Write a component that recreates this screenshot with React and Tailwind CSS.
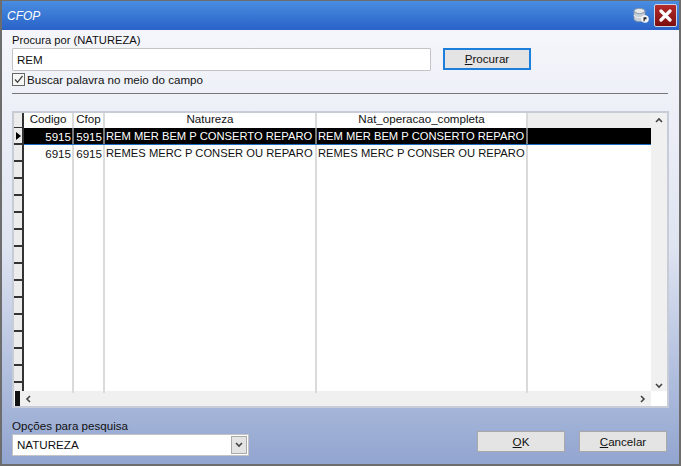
import React from 'react';

const COLS = [
  { name: 'Codigo', w: 'w-[50px]' },
  { name: 'Cfop', w: 'w-[31px]' },
  { name: 'Natureza', w: 'w-[212px]' },
  { name: 'Nat_operacao_completa', w: 'w-[211px]' },
];

const ROWS = [
  ['5915', '5915', 'REM MER BEM P CONSERTO REPARO', 'REM MER BEM P CONSERTO REPARO'],
  ['6915', '6915', 'REMES MERC P CONSER OU REPARO', 'REMES MERC P CONSER OU REPARO'],
];

const Chevron = ({ d }) => (
  <svg width="8" height="8" viewBox="0 0 8 8" fill="none" stroke="#444" strokeWidth="1.6">
    <path d={d} />
  </svg>
);

const Btn = ({ first, rest, className }) => (
  <button className={`flex items-center justify-center bg-[#e4e4e4] text-[11.6px] text-[#111] ${className}`}>
    <span><u>{first}</u>{rest}</span>
  </button>
);

const GridRow = ({ row, selected }) => (
  <div className={`flex h-[17px] items-stretch text-[11.2px] leading-[17px] ${selected ? 'border-b border-[#1c6fc0] bg-black text-white' : 'text-[#111]'}`}>
    {COLS.map((c, i) => (
      <div key={c.name} className={`${c.w} shrink-0 overflow-hidden whitespace-nowrap border-r-2 ${i < 2 ? 'pr-[1px] text-right text-[11.6px]' : 'pl-[1px]'} ${selected ? 'border-[#777]' : 'border-[#dadada]'}`}>
        {row[i]}
      </div>
    ))}
  </div>
);

export default function App() {
  return (
    <div className="flex h-[466px] w-[681px] flex-col overflow-hidden border-x-2 border-b-2 border-t border-[#6d6d6d] font-['Liberation_Sans',sans-serif] text-[11.6px] text-[#111]">
      {/* Title */}
      <div className="flex h-[29px] shrink-0 items-center justify-between bg-gradient-to-b from-[#4a8de0] to-[#2a62c8] pl-[5px] pr-[2px]">
        <span className="text-[12px] italic text-white">CFOP</span>
        <div className="flex items-center gap-[5px]">
          <svg width="16" height="18" viewBox="0 0 16 18">
            <ellipse cx="6.500" cy="4" rx="5.500" ry="2.600" fill="#e8e8e8" stroke="#8a98a8" />
            <path d="M1 4v8c0 1.500 2.500 2.600 5.500 2.600S12 13.500 12 12V4c0 1.500-2.500 2.600-5.500 2.600S1 5.500 1 4z" fill="#c6ced6" stroke="#8a98a8" strokeWidth=".7" />
            <path d="M1 8c0 1.500 2.500 2.600 5.500 2.600S12 9.500 12 8" fill="none" stroke="#f2f2f2" />
            <circle cx="12" cy="12" r="3.800" fill="#f6f6f6" />
            <path d="M10.500 10.200h3v2h-1.800v2h-1.200z" fill="#222" />
          </svg>
          <div className="flex h-[23px] w-[23px] items-center justify-center rounded-[2px] border border-[#c9d6ea] bg-gradient-to-b from-[#b52a2a] to-[#7c0f0f]">
            <svg width="13" height="13" viewBox="0 0 13 13" stroke="white" strokeWidth="3.200" strokeLinecap="round">
              <path d="M2 2l9 9M11 2l-9 9" />
            </svg>
          </div>
        </div>
      </div>

      {/* Body */}
      <div className="flex min-h-0 flex-1 flex-col bg-gradient-to-b from-[#f5f6fb] via-[#dfe4f1] to-[#92a5d0] pl-[10px] pr-[11px]">
        <div className="mt-[3px] h-[14px] text-[11.2px] leading-[14px]">Procura por (NATUREZA)</div>
        <div className="mt-[1px] flex items-stretch">
          <div className="flex h-[23px] w-[419px] items-center rounded-[1px] border border-[#c4c4c4] bg-white pl-[4px]">REM</div>
          <Btn first="P" rest="rocurar" className="ml-[12px] h-[22px] w-[88px] border-2 border-[#1c7fdc]" />
        </div>
        <div className="mt-[1px] flex h-[15px] items-center gap-[2px]">
          <div className="flex h-[13px] w-[13px] items-center justify-center border border-[#666] bg-[#f6f6f6]">
            <svg width="11" height="11" viewBox="0 0 11 11" fill="none" stroke="#444" strokeWidth="1.300">
              <path d="M2 5.500l2.500 2.800L9.500 2" />
            </svg>
          </div>
          <span>Buscar palavra no meio do campo</span>
        </div>
        <div className="mt-[6px] h-[1px] w-[656px] bg-[#777]" />

        {/* Grid */}
        <div className="mt-[17px] flex h-[297px] w-[657px] shrink-0 flex-col border-2 border-[#c8ccd6] bg-white">
          <div className="flex min-h-0 flex-1">
            {/* Indicator column */}
            <div className="w-[10px] shrink-0 overflow-hidden border-r-2 border-[#333] bg-[#ececec]">
              <div className="h-[15px] border-b border-[#333]" />
              {Array.from({ length: 15 }).map((_, i) => (
                <div key={i} className="flex h-[17px] items-center border-b-2 border-[#333]">
                  {i === 0 && <div className="ml-[2px] h-0 w-0 border-y-[4px] border-l-[5px] border-y-transparent border-l-black" />}
                </div>
              ))}
            </div>
            <div className="relative min-w-0 flex-1">
              <div className="flex h-[15px] bg-[#eeeeee] leading-[11px]">
                {COLS.map((c) => (
                  <div key={c.name} className={`${c.w} shrink-0 border-r-2 border-[#dadada] bg-white text-center`}>{c.name}</div>
                ))}
              </div>
              <GridRow row={ROWS[0]} selected />
              <GridRow row={ROWS[1]} />
              {/* column lines continuing below the rows */}
              <div className="flex h-[231px]">
                {COLS.map((c) => (
                  <div key={c.name} className={`${c.w} shrink-0 border-r-2 border-[#dadada]`} />
                ))}
              </div>
            </div>
            <div className="flex w-[16px] shrink-0 flex-col items-center justify-between bg-[#f0f0f0] pb-[1px] pt-[3px]">
              <Chevron d="M1 6l3-3 3 3" />
              <Chevron d="M1 2l3 3 3-3" />
            </div>
          </div>
          <div className="flex h-[15px] shrink-0">
            <div className="ml-[1px] h-[15px] w-[5px] bg-[#111]" />
            <div className="flex flex-1 items-center justify-between bg-[#f0f0f0] px-[4px]">
              <Chevron d="M6 1L3 4l3 3" />
              <Chevron d="M2 1l3 3-3 3" />
            </div>
            <div className="w-[16px] bg-white" />
          </div>
        </div>

        {/* Footer */}
        <div className="mt-[11px] flex items-start">
          <div>
            <div className="h-[14px] leading-[14px]">Opções para pesquisa</div>
            <div className="mt-[1px] flex h-[22px] w-[237px] items-center justify-between border border-[#c4c4c4] bg-white pl-[4px] pr-[1px]">
              <span>NATUREZA</span>
              <div className="flex h-[18px] w-[16px] items-center justify-center border border-[#aaa] bg-[#e4e4e4]">
                <Chevron d="M1 2l3 3 3-3" />
              </div>
            </div>
          </div>
          <Btn first="O" rest="K" className="ml-[228px] mt-[12px] h-[21px] w-[88px] border border-[#a8a8a8]" />
          <Btn first="C" rest="ancelar" className="ml-[14px] mt-[12px] h-[21px] w-[88px] border border-[#a8a8a8]" />
        </div>
      </div>
    </div>
  );
}
